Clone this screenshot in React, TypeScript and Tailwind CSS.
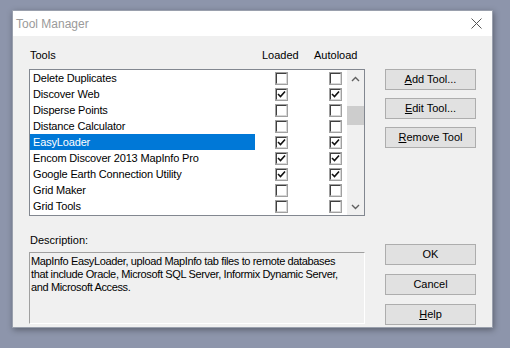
import React from "react";

type Tool = {
  name: string;
  loaded: boolean;
  autoload: boolean;
};

const tools: Tool[] = [
  { name: "Delete Duplicates", loaded: false, autoload: false },
  { name: "Discover Web", loaded: true, autoload: true },
  { name: "Disperse Points", loaded: false, autoload: false },
  { name: "Distance Calculator", loaded: false, autoload: false },
  { name: "EasyLoader", loaded: true, autoload: true },
  { name: "Encom Discover 2013 MapInfo Pro", loaded: true, autoload: true },
  { name: "Google Earth Connection Utility", loaded: true, autoload: true },
  { name: "Grid Maker", loaded: false, autoload: false },
  { name: "Grid Tools", loaded: false, autoload: false },
];

const font = { fontFamily: '"Liberation Sans", Arial, sans-serif' };

function CheckBox({ checked }: { checked: boolean }) {
  return (
    <div className="w-[13px] h-[13px] border border-[#a0a0a0] bg-white">
      <div className="w-full h-full border-t border-l border-[#404040] border-r-[#d8d8d8] border-b-[#d8d8d8] border-r border-b flex items-center justify-center">
        {checked && (
          <svg width="9" height="9" viewBox="0 0 9 9">
            <path d="M1 4 L3.5 6.5 L8 1.5" stroke="#111" strokeWidth="1.6" fill="none" />
          </svg>
        )}
      </div>
    </div>
  );
}

function DlgButton({ label, hot }: { label: string; hot?: number }) {
  return (
    <button className="w-[91px] h-[21px] bg-[#e1e1e1] border border-[#adadad] text-[11px] text-black leading-none flex items-center justify-center">
      {hot === undefined ? (
        label
      ) : (
        <span>
          {label.slice(0, hot)}
          <span className="underline underline-offset-1">{label[hot]}</span>
          {label.slice(hot + 1)}
        </span>
      )}
    </button>
  );
}

function ScrollBar() {
  return (
    <div className="w-[17px] h-full bg-[#f0f0f0] flex flex-col">
      <div className="h-[17px] flex items-center justify-center">
        <svg width="9" height="6" viewBox="0 0 9 6">
          <path d="M1 5 L4.5 1.5 L8 5" stroke="#606060" strokeWidth="1.4" fill="none" />
        </svg>
      </div>
      <div className="h-[19px] mt-[19px] bg-[#cdcdcd]" />
      <div className="flex-1" />
      <div className="h-[17px] flex items-center justify-center">
        <svg width="9" height="6" viewBox="0 0 9 6">
          <path d="M1 1 L4.5 4.5 L8 1" stroke="#606060" strokeWidth="1.4" fill="none" />
        </svg>
      </div>
    </div>
  );
}

export default function App() {
  return (
    <div className="w-[510px] h-[348px] bg-[#8d95ab] pt-[10px] pl-[12px] overflow-hidden" style={font}>
      <div className="w-[481px] h-[318px] bg-[#f0f0f0] border border-[#9aa0ad] shadow-[1px_2px_6px_rgba(0,0,0,0.35)] flex flex-col">
        {/* title bar */}
        <div className="h-[25px] bg-white flex items-center justify-between pl-[3px] pr-[10px]">
          <span className="text-[12px] text-[#9a9a9a]">Tool Manager</span>
          <svg width="11" height="11" viewBox="0 0 11 11">
            <path d="M0.5 0.5 L10.5 10.5 M10.5 0.5 L0.5 10.5" stroke="#555" strokeWidth="1" />
          </svg>
        </div>

        <div className="flex flex-1 pl-[16px] pr-[15px]">
          {/* left column */}
          <div className="w-[336px] flex flex-col">
            <div className="flex text-[11px] text-black h-[14px] mt-[12px] leading-[14px] pl-[1px]">
              <span className="w-[232px]">Tools</span>
              <span className="w-[52px]">Loaded</span>
              <span>Autoload</span>
            </div>
            <div className="mt-[7px] h-[147px] border border-[#828790] bg-white flex">
              <div className="flex-1">
                {tools.map((t) => {
                  const selected = t.name === "EasyLoader";
                  return (
                    <div key={t.name} className="h-[16px] flex items-center">
                      <div
                        className={
                          "w-[225px] h-[16px] pl-[3px] text-[11px] tracking-[-0.16px] leading-[16px] whitespace-nowrap " +
                          (selected ? "bg-[#0078d7] text-white" : "text-black")
                        }
                      >
                        {t.name}
                      </div>
                      <div className="ml-[20px]">
                        <CheckBox checked={t.loaded} />
                      </div>
                      <div className="ml-[41px]">
                        <CheckBox checked={t.autoload} />
                      </div>
                    </div>
                  );
                })}
              </div>
              <ScrollBar />
            </div>

            <div className="mt-[17px] text-[11px] text-black h-[14px] leading-[14px] pl-[1px]">Description:</div>
            <div className="mt-[5px] h-[72px] border-t border-l border-[#a0a0a0] border-r-white border-b-white border-r border-b pl-[1px] pt-[2px] text-[11px] tracking-[-0.36px] leading-[13px] text-black">
              MapInfo EasyLoader, upload MapInfo tab files to remote databases
              <br />
              that include Oracle, Microsoft SQL Server, Informix Dynamic Server,
              <br />
              and Microsoft Access.
            </div>
          </div>

          {/* right column */}
          <div className="ml-[20px] flex flex-col">
            <div className="mt-[33px] flex flex-col gap-[8px]">
              <DlgButton label="Add Tool..." hot={0} />
              <DlgButton label="Edit Tool..." hot={0} />
              <DlgButton label="Remove Tool" hot={0} />
            </div>
            <div className="mt-[96px] flex flex-col gap-[9px]">
              <DlgButton label="OK" />
              <DlgButton label="Cancel" />
              <DlgButton label="Help" hot={0} />
            </div>
          </div>
        </div>
      </div>
    </div>
  );
}
